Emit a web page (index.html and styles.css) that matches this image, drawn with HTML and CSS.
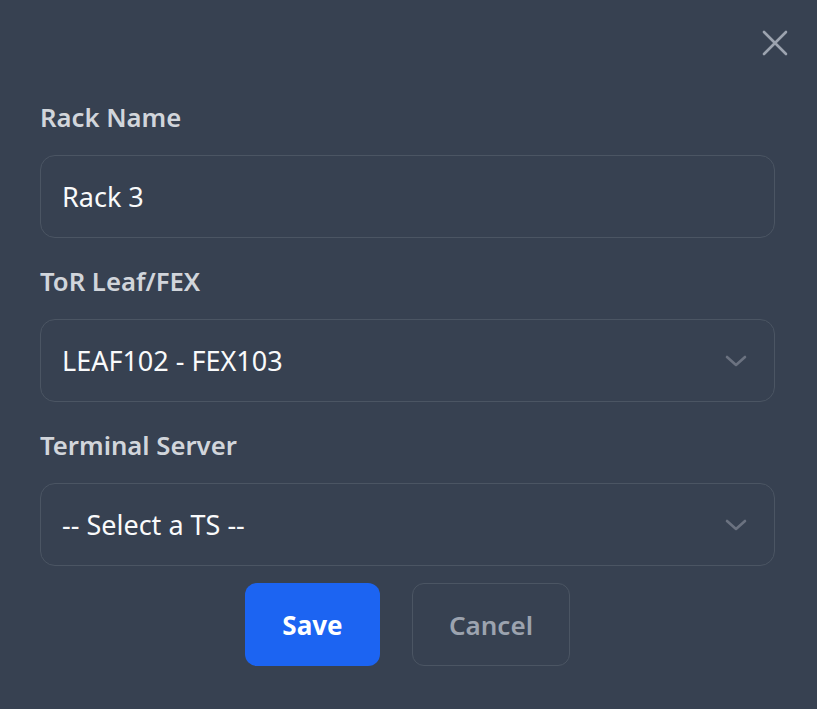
FILE: index.html
```html
<!DOCTYPE html>
<html>
<head>
<meta charset="utf-8">
<link rel="stylesheet" href="styles.css">
</head>
<body>
<div class="modal">
  <div class="modal-head">
    <button class="close" aria-label="Close">
      <svg width="26" height="26" viewBox="0 0 26 26"><path d="M2 2L24 24M24 2L2 24" stroke="#9ca3af" stroke-width="2.6" stroke-linecap="round" fill="none"/></svg>
    </button>
  </div>
  <div class="field">
    <label class="label">Rack Name</label>
    <div class="control"><span class="value">Rack 3</span></div>
  </div>
  <div class="field">
    <label class="label">ToR Leaf/FEX</label>
    <div class="control select"><span class="value">LEAF102 - FEX103</span>
      <svg class="chev" width="22" height="14" viewBox="0 0 22 14"><path d="M2 3L11 11L20 3" stroke="#6b7280" stroke-width="2.6" stroke-linecap="round" stroke-linejoin="round" fill="none"/></svg>
    </div>
  </div>
  <div class="field last">
    <label class="label">Terminal Server</label>
    <div class="control select"><span class="value">-- Select a TS --</span>
      <svg class="chev" width="22" height="14" viewBox="0 0 22 14"><path d="M2 3L11 11L20 3" stroke="#6b7280" stroke-width="2.6" stroke-linecap="round" stroke-linejoin="round" fill="none"/></svg>
    </div>
  </div>
  <div class="actions">
    <button class="btn save">Save</button>
    <button class="btn cancel">Cancel</button>
  </div>
</div>
</body>
</html>
```
FILE: styles.css
```css
html, body {
  margin: 0;
  padding: 0;
  background: #374151;
  height: 100%;
}
body {
  font-family: "Noto Sans", "Open Sans", sans-serif;
}
.modal {
  padding: 30px 42px 0 40px;
}
.modal-head {
  display: flex;
  justify-content: flex-end;
  height: 26px;
  margin-right: -13px;
  margin-bottom: 44px;
}
.close {
  background: none;
  border: 0;
  padding: 0;
  width: 26px;
  height: 26px;
  display: flex;
}
.field {
  display: flex;
  flex-direction: column;
  margin-bottom: 26px;
}
.field.last {
  margin-bottom: 17px;
}
.label {
  font-size: 25.7px;
  line-height: 36px;
  font-weight: 600;
  color: #d1d5db;
  margin-bottom: 19px;
}
.control {
  height: 83px;
  box-sizing: border-box;
  border: 1px solid #4b5563;
  border-radius: 15px;
  display: flex;
  align-items: center;
  padding: 0 27px 0 21px;
  justify-content: space-between;
}
.value {
  font-size: 27px;
  color: #f9fafb;
}
.actions {
  display: flex;
  justify-content: center;
  gap: 32px;
}
.btn {
  height: 83px;
  border-radius: 12px;
  font-family: inherit;
  font-size: 26px;
  font-weight: 700;
  box-sizing: border-box;
}
.save {
  width: 135px;
  background: #1c64f2;
  border: 0;
  color: #ffffff;
}
.cancel {
  width: 158px;
  background: transparent;
  border: 1px solid #4b5563;
  color: #9ca3af;
  font-weight: 600;
}
```
